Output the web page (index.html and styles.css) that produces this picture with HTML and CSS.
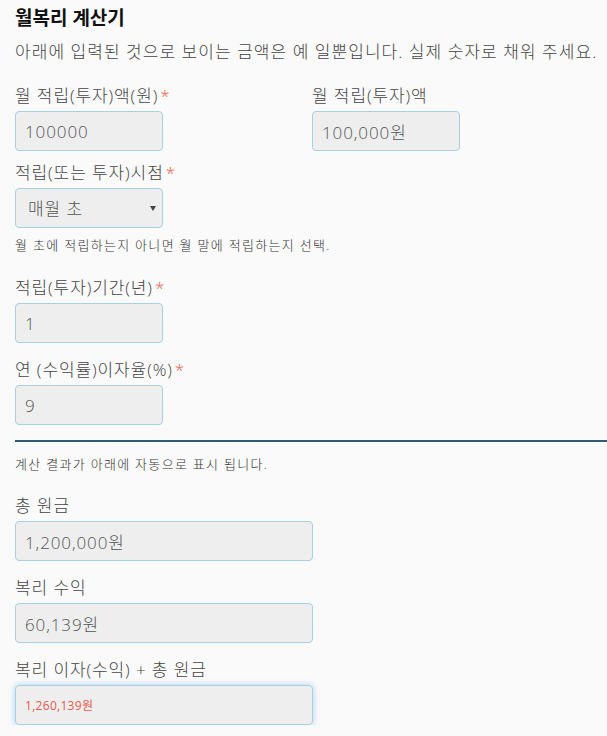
FILE: index.html
```html
<!DOCTYPE html>
<html lang="ko">
<head>
<meta charset="utf-8">
<title>월복리 계산기</title>
<link rel="stylesheet" href="styles.css">
</head>
<body>
<main class="calc">
  <h1 class="title">월복리 계산기</h1>
  <p class="intro">아래에 입력된 것으로 보이는 금액은 예 일뿐입니다. 실제 숫자로 채워 주세요.</p>

  <div class="row">
    <div class="field field-first">
      <label class="label">월 적립(투자)액(원)<span class="req">*</span></label>
      <input class="box box-sm" type="text" value="100000" readonly>
    </div>
    <div class="field field-first field-right">
      <label class="label">월 적립(투자)액</label>
      <input class="box box-sm" type="text" value="100,000원" readonly>
    </div>
  </div>

  <div class="field field-tight">
    <label class="label">적립(또는 투자)시점<span class="req">*</span></label>
    <div class="select-wrap">
      <select class="box box-sm select">
        <option>매월 초</option>
        <option>매월 말</option>
      </select>
    </div>
    <p class="help">월 초에 적립하는지 아니면 월 말에 적립하는지 선택.</p>
  </div>

  <div class="field field-after-help">
    <label class="label">적립(투자)기간(년)<span class="req">*</span></label>
    <input class="box box-sm" type="text" value="1" readonly>
  </div>

  <div class="field">
    <label class="label">연 (수익률)이자율(%)<span class="req">*</span></label>
    <input class="box box-sm" type="text" value="9" readonly>
  </div>

  <hr class="divider">
  <p class="note">계산 결과가 아래에 자동으로 표시 됩니다.</p>

  <div class="field field-result-first">
    <label class="label">총 원금</label>
    <input class="box box-lg" type="text" value="1,200,000원" readonly>
  </div>

  <div class="field">
    <label class="label">복리 수익</label>
    <input class="box box-lg" type="text" value="60,139원" readonly>
  </div>

  <div class="field">
    <label class="label">복리 이자(수익) + 총 원금</label>
    <input class="box box-lg box-total" type="text" value="1,260,139원" readonly>
  </div>
</main>
</body>
</html>
```

FILE: styles.css
```css
* {
  box-sizing: border-box;
}

html, body {
  margin: 0;
  padding: 0;
  background: #fafafa;
}

body {
  font-family: "Open Sans", "Noto Sans CJK KR", sans-serif;
  font-weight: 300;
  color: #444;
}

.calc {
  padding-left: 15px;
}

.title {
  margin: 5px 0 0;
  font-size: 19px;
  line-height: 26px;
  font-weight: 700;
  color: #111;
}

.intro {
  margin: 8px 0 0;
  font-size: 17px;
  line-height: 26px;
  letter-spacing: 1.05px;
  color: #444;
  white-space: nowrap;
}

.row {
  display: flex;
  margin-top: 19px;
}

.field {
  display: flex;
  flex-direction: column;
  align-items: flex-start;
  margin-top: 15px;
}

.field-first {
  margin-top: 0;
  width: 297px;
}

.field-right {
  width: auto;
}

.field-tight {
  margin-top: 10px;
}

.field-after-help {
  margin-top: 22px;
}

.field-result-first {
  margin-top: 21px;
}

.label {
  display: block;
  font-size: 17px;
  line-height: 24px;
  letter-spacing: 0.9px;
  margin-bottom: 3px;
  color: #444;
}

.req {
  color: #e9573f;
  margin-left: 2px;
}

.box {
  height: 40px;
  padding: 0 9px;
  border: 1px solid #a9cfe4;
  border-radius: 4px;
  background: #eeeeee;
  font-family: "Open Sans", "Noto Sans CJK KR", sans-serif;
  font-weight: 300;
  font-size: 17px;
  letter-spacing: 0.9px;
  color: #555;
  outline: none;
}

.box-sm {
  width: 148px;
}

.box-lg {
  width: 298px;
}

.box-total {
  font-size: 12px;
  font-weight: 400;
  letter-spacing: 0.3px;
  color: #e8584a;
  box-shadow: 0 0 6px rgba(102, 175, 233, 0.55);
}

.select-wrap {
  position: relative;
}

.select {
  -webkit-appearance: none;
  appearance: none;
  padding-left: 12px;
}

.select-wrap::after {
  content: "";
  position: absolute;
  right: 7px;
  top: 18px;
  border-left: 3.5px solid transparent;
  border-right: 3.5px solid transparent;
  border-top: 5px solid #444;
}

.help {
  margin: 8px 0 0;
  font-size: 13px;
  line-height: 18px;
  letter-spacing: 1.3px;
  color: #333;
}

.divider {
  margin: 15px 0 0;
  border: 0;
  height: 2px;
  background: #2e5d75;
}

.note {
  margin: 13px 0 0;
  font-size: 13px;
  line-height: 18px;
  letter-spacing: 1.3px;
  color: #333;
}
```
